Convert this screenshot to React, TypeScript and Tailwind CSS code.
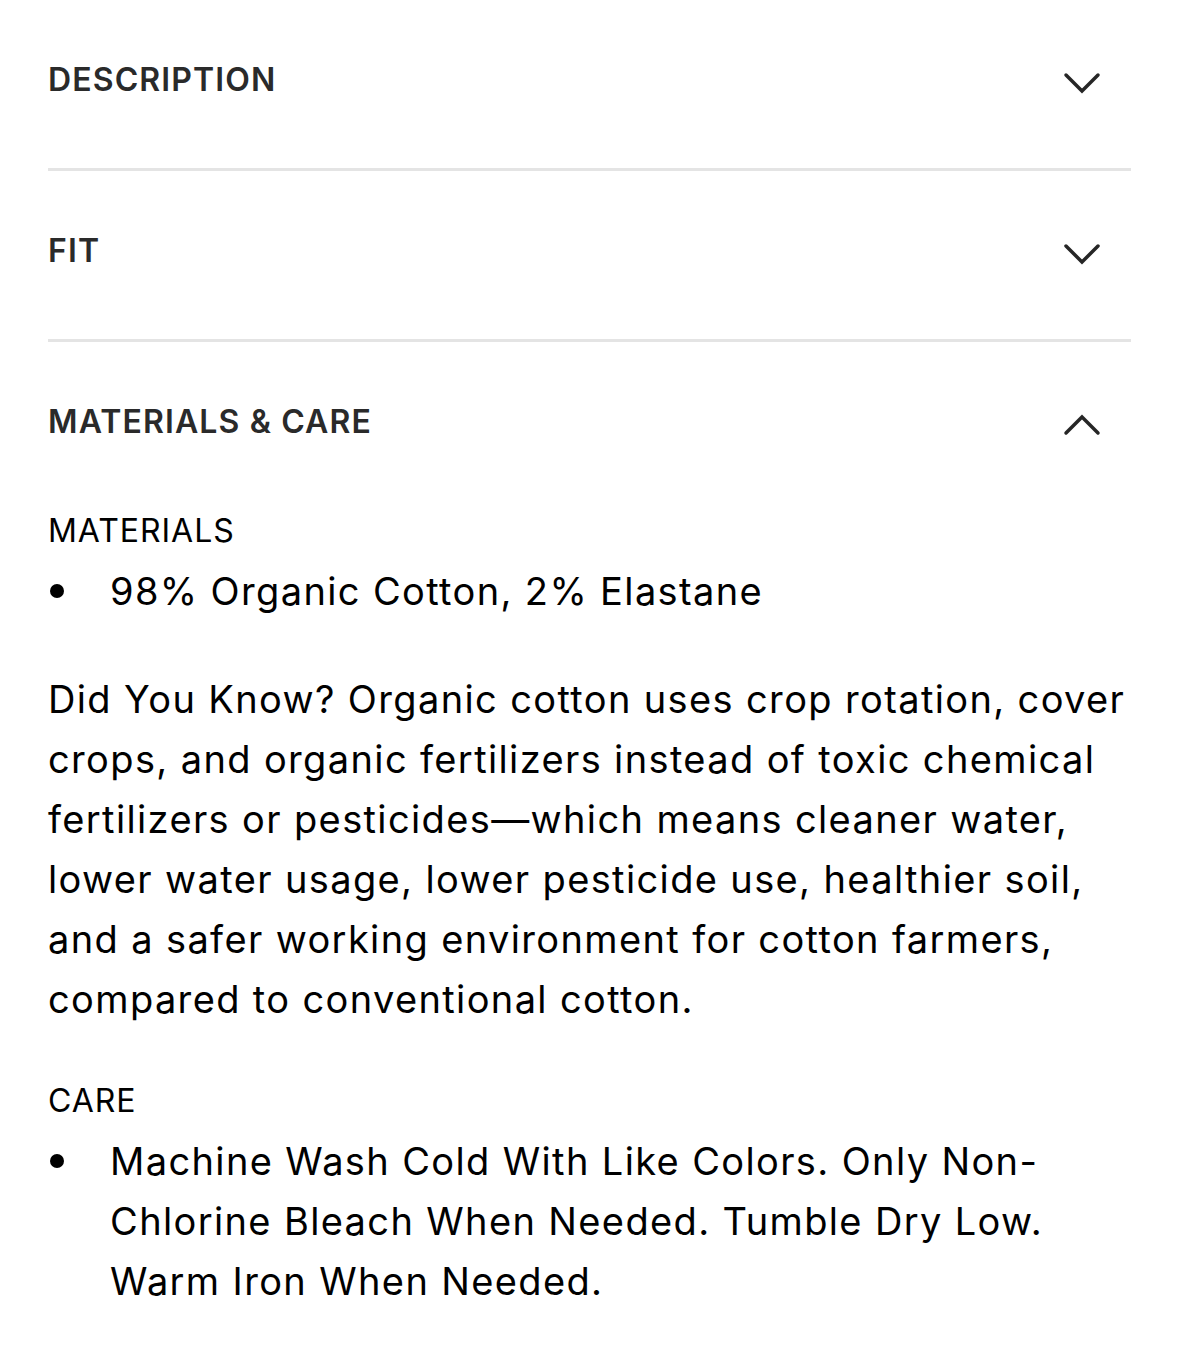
const font = { fontFamily: "Inter, 'Noto Sans', sans-serif" };

function Chevron({ up }: { up?: boolean }) {
  return (
    <svg width="40" height="24" viewBox="0 0 40 24" fill="none" className="mt-[6px]">
      <polyline
        points={up ? "4,20 20,4 36,20" : "4,4 20,20 36,4"}
        stroke="#262626"
        strokeWidth="3.5"
        strokeLinecap="round"
        strokeLinejoin="miter"
      />
    </svg>
  );
}

function Header({ title, open }: { title: string; open?: boolean }) {
  return (
    <div className="flex h-[168px] items-center justify-between pb-[8px]">
      <h3 className="text-[32px] font-semibold tracking-[0.035em] text-[#2a2a2a]">{title}</h3>
      <span className="mr-[29px]">
        <Chevron up={open} />
      </span>
    </div>
  );
}

function Bullet({ children }: { children: React.ReactNode }) {
  return (
    <li className="flex">
      <span className="flex h-[60px] w-[62px] shrink-0 items-center">
        <span className="ml-[2px] h-[14px] w-[14px] rounded-full bg-black" />
      </span>
      <span>{children}</span>
    </li>
  );
}

export default function App() {
  return (
    <div className="min-h-[1353px] bg-white px-[48px] text-black" style={font}>
      <Header title="DESCRIPTION" />
      <div className="h-[3px] bg-[#e4e4e4]" />
      <Header title="FIT" />
      <div className="h-[3px] bg-[#e4e4e4]" />
      <Header title="MATERIALS & CARE" open />

      <div className="mt-[1px] text-[38px] leading-[60px] tracking-[0.036em]">
        <p className="text-[32px] leading-[40px] tracking-[0.03em]">MATERIALS</p>
        <ul className="mt-[10px]">
          <Bullet>98% Organic Cotton, 2% Elastane</Bullet>
        </ul>
        <p className="mt-[48px]">
          Did You Know? Organic cotton uses crop rotation, cover crops, and organic fertilizers instead of
          toxic chemical fertilizers or pesticides—which means cleaner water, lower water usage, lower
          pesticide use, healthier soil, and a safer working environment for cotton farmers, compared to
          conventional cotton.
        </p>
        <p className="mt-[52px] text-[32px] leading-[40px] tracking-[0.03em]">CARE</p>
        <ul className="mt-[10px]">
          <Bullet>
            Machine Wash Cold With Like Colors. Only Non-Chlorine Bleach When Needed. Tumble Dry Low. Warm
            Iron When Needed.
          </Bullet>
        </ul>
      </div>
    </div>
  );
}
